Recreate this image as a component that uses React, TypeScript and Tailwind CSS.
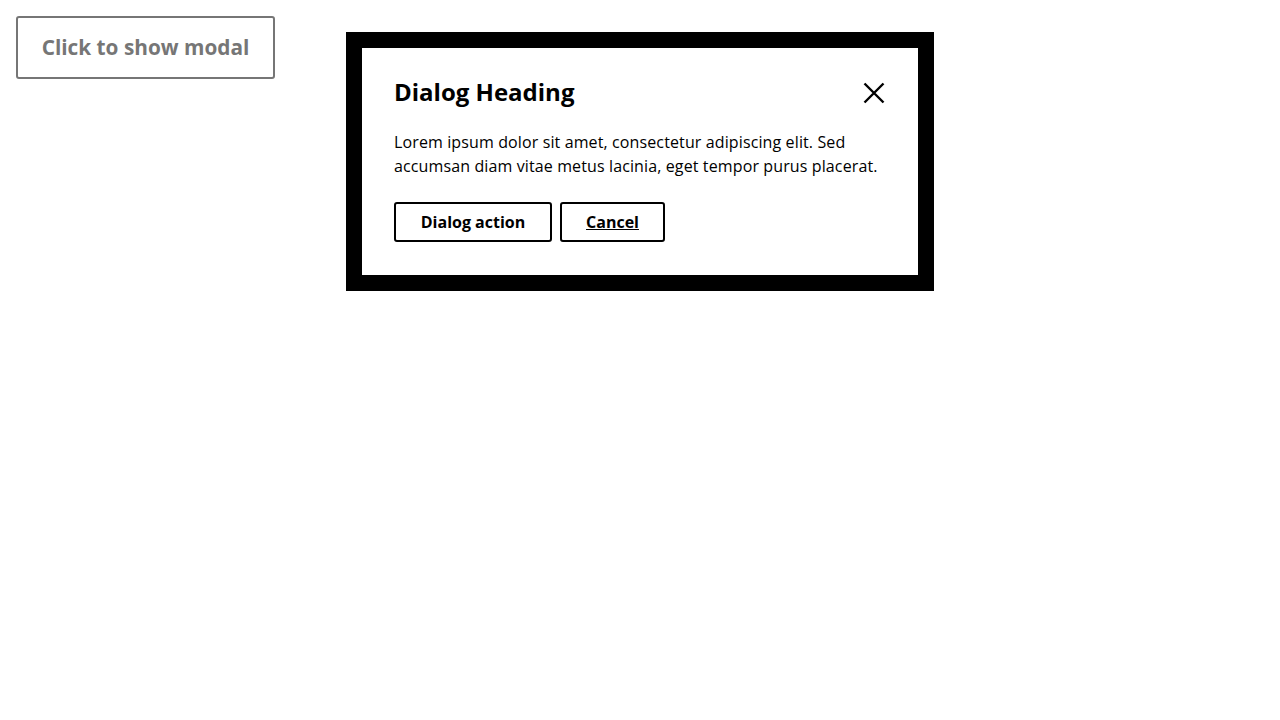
import React from 'react';

export default function App() {
  return (
    <div className="min-h-screen bg-white font-['Open_Sans',sans-serif]">
      {/* trigger */}
      <div className="p-4">
        <button className="h-[63px] w-[259px] flex items-center justify-center border-2 border-[#767676] rounded-[3px] text-[20.8px] font-bold text-[#767676] bg-white">
          Click to show modal
        </button>
      </div>

      {/* modal */}
      <div className="fixed inset-0 flex justify-center items-start pt-8">
        <div role="dialog" className="w-[588px] border-[16px] border-black bg-white px-8 pt-[29px] pb-[33px] text-black">
          <div className="flex items-center justify-between h-[30px]">
            <h2 className="text-[24px] leading-[30px] font-bold">Dialog Heading</h2>
            <button aria-label="Close" className="w-6 h-6 flex items-center justify-center">
              <svg width="24" height="24" viewBox="0 0 24 24" fill="none" stroke="black" strokeWidth="2.4">
                <path d="M2.5 3.5 L21.5 22.5 M21.5 3.5 L2.5 22.5" />
              </svg>
            </button>
          </div>
          <p className="mt-[23px] text-[16px] leading-6 tracking-[0.12px]">
            Lorem ipsum dolor sit amet, consectetur adipiscing elit. Sed accumsan diam vitae metus lacinia, eget tempor purus placerat.
          </p>
          <div className="mt-6 flex gap-2">
            <button className="h-10 w-[158px] border-2 border-black rounded-[3px] text-[16px] font-bold">Dialog action</button>
            <button className="h-10 w-[105px] border-2 border-black rounded-[3px] text-[16px] font-bold underline">Cancel</button>
          </div>
        </div>
      </div>
    </div>
  );
}
